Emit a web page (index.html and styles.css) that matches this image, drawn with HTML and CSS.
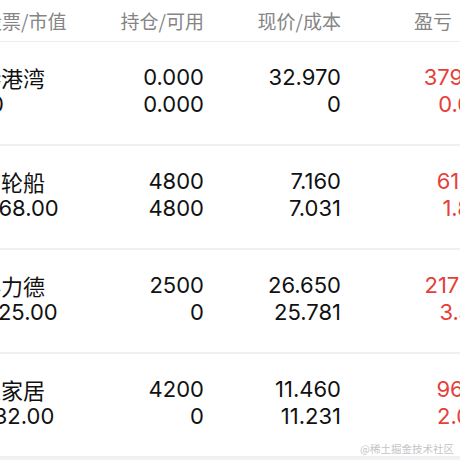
FILE: index.html
```html
<!DOCTYPE html>
<html lang="zh-CN">
<head>
<meta charset="utf-8">
<link rel="stylesheet" href="styles.css">
</head>
<body>
<div class="viewport">
  <div class="table">
    <div class="head">
      <div class="hc c1">股票/市值</div>
      <div class="hc c2">持仓/可用</div>
      <div class="hc c3">现价/成本</div>
      <div class="hc c4">盈亏</div>
    </div>
    <div class="row">
      <div class="cell c1"><span class="name">粤港港湾</span><span>0.00</span></div>
      <div class="cell c2"><span>0.000</span><span>0.000</span></div>
      <div class="cell c3"><span>32.970</span><span>0</span></div>
      <div class="cell c4 up"><span>3797.00</span><span>0.62%</span></div>
    </div>
    <div class="row">
      <div class="cell c1"><span class="name">招商轮船</span><span>34368.00</span></div>
      <div class="cell c2"><span>4800</span><span>4800</span></div>
      <div class="cell c3"><span>7.160</span><span>7.031</span></div>
      <div class="cell c4 up"><span>619.20</span><span>1.83%</span></div>
    </div>
    <div class="row">
      <div class="cell c1"><span class="name">英科力德</span><span>66625.00</span></div>
      <div class="cell c2"><span>2500</span><span>0</span></div>
      <div class="cell c3"><span>26.650</span><span>25.781</span></div>
      <div class="cell c4 up"><span>2172.50</span><span>3.37%</span></div>
    </div>
    <div class="row">
      <div class="cell c1"><span class="name">顾家家居</span><span>48132.00</span></div>
      <div class="cell c2"><span>4200</span><span>0</span></div>
      <div class="cell c3"><span>11.460</span><span>11.231</span></div>
      <div class="cell c4 up"><span>961.80</span><span>2.04%</span></div>
    </div>
  </div>
  <div class="mark">@稀土掘金技术社区</div>
</div>
</body>
</html>
```
FILE: styles.css
```css
html, body {
  margin: 0;
  padding: 0;
  background: #f3f3f6;
}
.viewport {
  position: relative;
  width: 460px;
  height: 460px;
  overflow: hidden;
  font-family: Inter, "Noto Sans CJK SC", sans-serif;
}
.table {
  width: 549px;
  margin-left: -43px;
  background: #fff;
}
.head, .row {
  display: grid;
  grid-template-columns: 147px 100px 137px 165px;
}
.head {
  height: 41px;
  border-bottom: 1px solid #ececec;
  align-items: center;
}
.hc {
  font-family: "Noto Sans CJK SC", sans-serif;
  font-size: 19px;
  color: #858585;
  line-height: 41px;
}
.hc.c1 { padding-left: 26px; }
.hc.c2, .hc.c3 { text-align: right; }
.hc.c4 { text-align: right; padding-right: 54px; }
.row {
  height: 102px;
  border-bottom: 2px solid #f0f0f0;
}
.cell {
  display: flex;
  flex-direction: column;
  padding-top: 22px;
  font-size: 22px;
  line-height: 27px;
  color: #111;
  white-space: nowrap;
}
.cell.c2, .cell.c3, .cell.c4 { align-items: flex-end; }
.cell .name {
  font-family: "Noto Sans CJK SC", sans-serif;
}
.cell.up { color: #e5403b; }
.mark {
  position: absolute;
  right: 6px;
  bottom: 4px;
  font-family: "Noto Sans CJK SC", sans-serif;
  font-size: 10.5px;
  color: #c4c4c8;
}
```
